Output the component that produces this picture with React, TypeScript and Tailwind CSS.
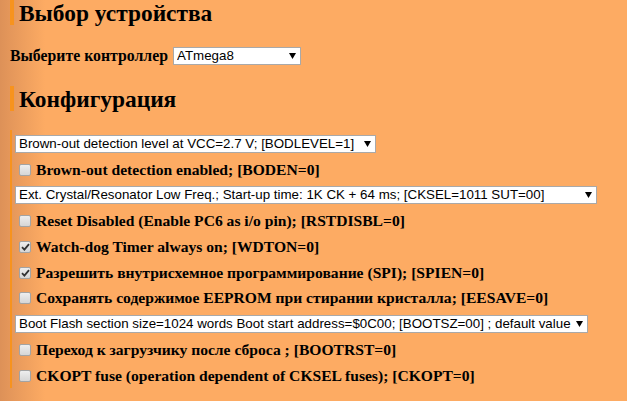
import React from 'react';

const serif = "font-['Liberation_Serif','Times_New_Roman',serif]";
const sans = "font-['Liberation_Sans',Arial,sans-serif]";

const Arrow = () => (
  <svg className="absolute right-[5px] top-[6px] pointer-events-none" width="7" height="6" viewBox="0 0 7 6">
    <polygon points="0,0 7,0 3.5,6" fill="#000" />
  </svg>
);

const Select = ({ value, className }: { value: string; className: string }) => (
  <div className={`relative h-[18px] shrink-0 ${className}`}>
    <select
      defaultValue={value}
      className={`${sans} block appearance-none w-full h-full bg-white border border-[#a9a9a9] pl-[3px] pr-[14px] text-[13.33px] leading-[16px] text-black outline-none`}
    >
      <option value={value}>{value}</option>
    </select>
    <Arrow />
  </div>
);

const Check = ({ checked }: { checked?: boolean }) => (
  <span className="w-[12px] h-[12px] shrink-0 rounded-[2px] border border-[#a3a3a3] bg-gradient-to-b from-[#eeeeee] to-[#d6d6d6] flex items-center justify-center">
    {checked && (
      <svg width="9" height="8" viewBox="0 0 9 8">
        <path d="M1 4.2 L3.4 6.6 L8 1.2" stroke="#333" strokeWidth="1.8" fill="none" />
      </svg>
    )}
  </span>
);

const Row = ({ children }: { children: React.ReactNode }) => (
  <div className="h-[25.75px] flex items-center">{children}</div>
);

const Fuse = ({ label, checked }: { label: string; checked?: boolean }) => (
  <Row>
    <div className="flex items-center gap-[5px] pl-[4px]">
      <Check checked={checked} />
      <span className={`${serif} text-[15.6px] leading-[18px] font-bold text-black whitespace-nowrap`}>{label}</span>
    </div>
  </Row>
);

const App = () => {
  return (
    <div className="w-[627px] h-[401px] overflow-hidden bg-[linear-gradient(to_right,#dd9158_0px,#fdab63_45px)] pl-[10px]">
      <h2 className={`${serif} border-l-4 border-[#f7931e] pl-[5px] h-[25px] leading-[25px] pt-[1px] text-[23.4px] font-bold text-black`}>
        Выбор устройства
      </h2>

      <div className="mt-[22px] h-[18px] flex items-center gap-[5px]">
        <span className={`${serif} text-[15.8px] leading-[18px] font-bold text-black`}>Выберите контроллер</span>
        <Select value="ATmega8" className="w-[128px]" />
      </div>

      <h2 className={`${serif} mt-[21px] border-l-4 border-[#f7931e] pl-[5px] h-[25px] leading-[25px] pt-[1px] text-[23.4px] font-bold text-black`}>
        Конфигурация
      </h2>

      <div className="mt-[19px] border-l-2 border-[#f7931e] pt-[1px] pl-[3px] h-[258px]">
        <Row>
          <Select value="Brown-out detection level at VCC=2.7 V; [BODLEVEL=1]" className="w-[361px]" />
        </Row>
        <Fuse label="Brown-out detection enabled; [BODEN=0]" />
        <Row>
          <Select
            value="Ext. Crystal/Resonator Low Freq.; Start-up time: 1K CK + 64 ms; [CKSEL=1011 SUT=00]"
            className="w-[582px]"
          />
        </Row>
        <Fuse label="Reset Disabled (Enable PC6 as i/o pin); [RSTDISBL=0]" />
        <Fuse label="Watch-dog Timer always on; [WDTON=0]" checked />
        <Fuse label="Разрешить внутрисхемное программирование (SPI); [SPIEN=0]" checked />
        <Fuse label="Сохранять содержимое EEPROM при стирании кристалла; [EESAVE=0]" />
        <Row>
          <Select
            value="Boot Flash section size=1024 words Boot start address=$0C00; [BOOTSZ=00] ; default value"
            className="w-[573px]"
          />
        </Row>
        <Fuse label="Переход к загрузчику после сброса ; [BOOTRST=0]" />
        <Fuse label="CKOPT fuse (operation dependent of CKSEL fuses); [CKOPT=0]" />
      </div>
    </div>
  );
};

export default App;
